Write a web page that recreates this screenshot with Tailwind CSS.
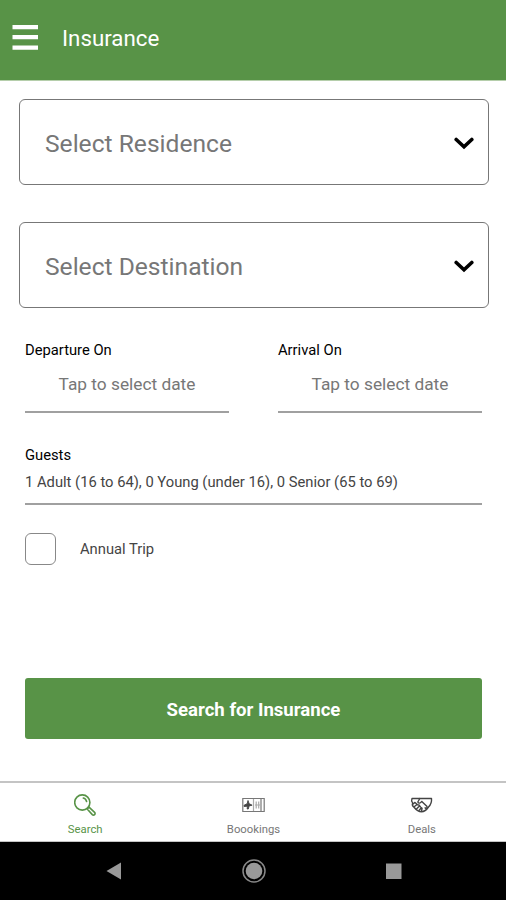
<!DOCTYPE html>
<html lang="en">
<head>
<meta charset="utf-8">
<meta name="viewport" content="width=device-width, initial-scale=1">
<title>Insurance</title>
<script src="https://cdn.jsdelivr.net/npm/@tailwindcss/browser@4"></script>
</head>
<body class="bg-white font-[Roboto,sans-serif] text-black">
<div class="flex h-[900px] w-[506px] flex-col overflow-hidden">
  <header class="flex h-[81px] shrink-0 items-center border-b border-[#b5ceab] bg-[#589347] pb-1 pl-3">
    <svg class="h-[26px] w-[26px]" viewBox="0 0 26 26" fill="#fff"><path d="M.5 0H26v4.200H.5zM.5 10H26v4.200H.5zM.5 20.500H26v4.200H.5z"/></svg>
    <h1 class="ml-6 text-[22.3px] leading-[30px] text-white">Insurance</h1>
  </header>

  <main class="flex grow flex-col pt-[18px]">
    <div class="ml-[19px] flex w-[470px] flex-col gap-[37px]">
      <div class="flex h-[86px] items-center justify-between rounded-md border-[1.500px] border-[#777] pr-[14px] pl-[25px] pt-1">
        <span class="text-[24.6px] leading-8 text-[#777]">Select Residence</span>
        <svg class="h-[14px] w-5" viewBox="0 0 20 14" fill="none" stroke="#000" stroke-width="3.600" stroke-linecap="round"><path d="M2.200 2.500 10 9.800 17.800 2.500"/></svg>
      </div>
      <div class="flex h-[86px] items-center justify-between rounded-md border-[1.500px] border-[#777] pr-[14px] pl-[25px] pt-1">
        <span class="text-[24.6px] leading-8 text-[#777]">Select Destination</span>
        <svg class="h-[14px] w-5" viewBox="0 0 20 14" fill="none" stroke="#000" stroke-width="3.600" stroke-linecap="round"><path d="M2.200 2.500 10 9.800 17.800 2.500"/></svg>
      </div>
    </div>

    <div class="flex flex-col pr-6 pl-[25px] pt-8">
      <div class="flex justify-between">
        <div class="h-[73px] w-[204px] border-b-2 border-[#a0a0a0]">
          <div class="text-[14.750px] leading-5">Departure On</div>
          <div class="mt-3 text-center text-[17.3px] leading-6 text-[#777]">Tap to select date</div>
        </div>
        <div class="h-[73px] w-[204px] border-b-2 border-[#a0a0a0]">
          <div class="text-[14.750px] leading-5">Arrival On</div>
          <div class="mt-3 text-center text-[17.3px] leading-6 text-[#777]">Tap to select date</div>
        </div>
      </div>
      <div class="mt-8 h-[60px] border-b-2 border-[#a0a0a0]">
        <div class="text-[14.750px] leading-5">Guests</div>
        <div class="mt-[7px] text-[14.750px] leading-5 text-[#444]">1 Adult (16 to 64), 0 Young (under 16), 0 Senior (65 to 69)</div>
      </div>
      <label class="mt-7 flex h-8 items-center gap-6">
        <span class="h-8 w-[31px] rounded-md border border-[#888]"></span>
        <span class="text-[14.750px] leading-5 text-[#444]">Annual Trip</span>
      </label>
      <button class="mt-[113px] h-[61px] rounded-[3px] bg-[#589347] pt-1 text-[18.6px] font-bold text-white">Search for Insurance</button>
    </div>
  </main>

  <nav class="flex h-[61px] shrink-0 border-t-2 border-b border-[#c4c4c4] pt-[10px] pl-px text-[11.3px] leading-4 text-[#777]">
    <div class="flex flex-1 flex-col items-center gap-[6px] text-[#589347]">
      <svg class="h-[23px] w-[23px]" viewBox="1 0 23 23" fill="none" stroke="currentColor" stroke-width="1.600" stroke-linecap="round" stroke-linejoin="round"><circle cx="9.300" cy="9.500" r="7.600"/><path d="M10.300 5a4.500 4.500 0 0 1 3.300 3.500M14.200 16l1.800-1.900 5.600 5.200a1.500 1.500 0 0 1-2.300 2.300z"/></svg>
      <span>Search</span>
    </div>
    <div class="flex flex-1 flex-col items-center gap-[6px]">
      <svg class="h-[23px] w-[23px]" viewBox="0 0 23 23" fill="none" stroke="#777" stroke-width="1.200"><path d="M.8 5.500h21.400v13H.8zM19 6v12"/><path d="M11.500 6v12M14.200 8.500v7M16.700 8.500v7M13 12h5" stroke="#aaa"/><path d="m6 7.500 1.100 3.200 3 1.500-3 .7L6.300 16H5.200l.2-2.800-3.300.3v-1.300l3.100-1.500z" fill="#444" stroke="#444" stroke-width=".9"/></svg>
      <span>Boookings</span>
    </div>
    <div class="flex flex-1 flex-col items-center gap-[6px]">
      <svg class="h-[23px] w-[23px]" viewBox="0 0 23 23" fill="none" stroke="#444" stroke-width="1.400" stroke-linecap="round" stroke-linejoin="round"><path d="M2 5.500h19.500c.3 3-.5 6-3 8.500-2 3-4.500 4.700-7 4.700-3 0-5.500-2-7.500-4.500C2.300 13 2 11.500 2.700 10L1.600 8z"/><path d="M9.800 5.500 7.800 9c.9 1.800 2.700 1.300 4-.6l5 4.800c1 1.300-.2 2.600-1.700 1.600M3 11l2-1.600 2.500 2.400 1.500.2 1.500 2 1.600 1.200-.6 3M4.500 13.500l2.200-1.800M6.700 15.700l2-2M9 17.500l1.700-2"/></svg>
      <span>Deals</span>
    </div>
  </nav>

  <footer class="flex h-[58px] shrink-0 items-center justify-center gap-[115px] bg-black pr-px">
    <svg class="h-6 w-[26px]" viewBox="0 0 26 24" fill="#999"><path d="M20 3.500v17L5.500 12z"/></svg>
    <svg class="h-6 w-6" viewBox="0 0 24 24"><circle cx="12" cy="12" r="11" fill="none" stroke="#888" stroke-width="1.500"/><circle cx="12" cy="12" r="8.300" fill="#999"/></svg>
    <svg class="h-6 w-6" viewBox="0 0 24 24" fill="#999"><path d="M5 4.500h15.500v15.500H5z"/></svg>
  </footer>
</div>
</body>
</html>
